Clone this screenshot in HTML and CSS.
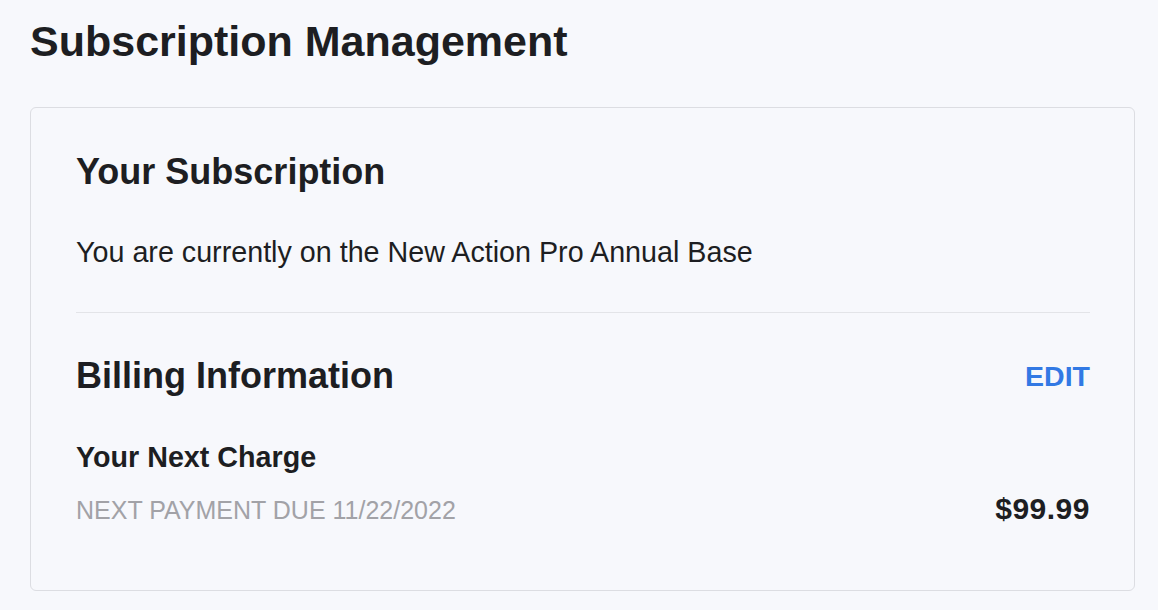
FILE: index.html
```html
<!DOCTYPE html>
<html lang="en">
  <head>
    <meta charset="UTF-8" />
    <meta name="viewport" content="width=device-width, initial-scale=1.0" />
    <title>Subscription Management</title>
    <link rel="stylesheet" href="styles.css">
  </head>
  <body>
    <div class="page">
      <h1>Subscription Management</h1>
      <div class="card">
        <h2>Your Subscription</h2>
        <p class="plan">You are currently on the New Action Pro Annual Base</p>
        <hr class="divider" />
        <div class="billing-head">
          <h2>Billing Information</h2>
          <a href="#" class="edit-link">EDIT</a>
        </div>
        <h3>Your Next Charge</h3>
        <div class="charge-row">
          <span class="due-date">NEXT PAYMENT DUE 11/22/2022</span>
          <span class="amount">$99.99</span>
        </div>
      </div>
    </div>
  </body>
</html>
```

FILE: styles.css
```css
* {
  margin: 0;
  padding: 0;
  box-sizing: border-box;
  font-family: "Liberation Sans", Arial, Helvetica, sans-serif;
}
body {
  background-color: #f7f8fc;
  color: #1d1e22;
}
.page {
  padding: 15px 23px 20px 30px;
}
h1 {
  font-size: 43px;
  line-height: 52px;
  font-weight: bold;
  margin-bottom: 40px;
}
.card {
  border: 1px solid #dcdde2;
  border-radius: 6px;
  padding: 43px 44px 65px 45px;
}
h2 {
  font-size: 36px;
  line-height: 42px;
  font-weight: bold;
}
.plan {
  font-size: 28.7px;
  line-height: 34px;
  margin-top: 42px;
}
.divider {
  border: none;
  border-top: 1px solid #e3e4e8;
  margin: 43px 0 42px;
}
.billing-head {
  display: flex;
  justify-content: space-between;
  align-items: center;
}
.edit-link {
  font-size: 28.5px;
  line-height: 42px;
  font-weight: bold;
  color: #3279e4;
  text-decoration: none;
}
h3 {
  font-size: 28.7px;
  line-height: 34px;
  font-weight: bold;
  margin-top: 43px;
}
.charge-row {
  display: flex;
  justify-content: space-between;
  align-items: baseline;
  margin-top: 20px;
}
.due-date {
  font-size: 25px;
  line-height: 30px;
  color: #a2a2a7;
}
.amount {
  font-size: 30px;
  line-height: 30px;
  font-weight: bold;
  letter-spacing: 0.5px;
}
```
